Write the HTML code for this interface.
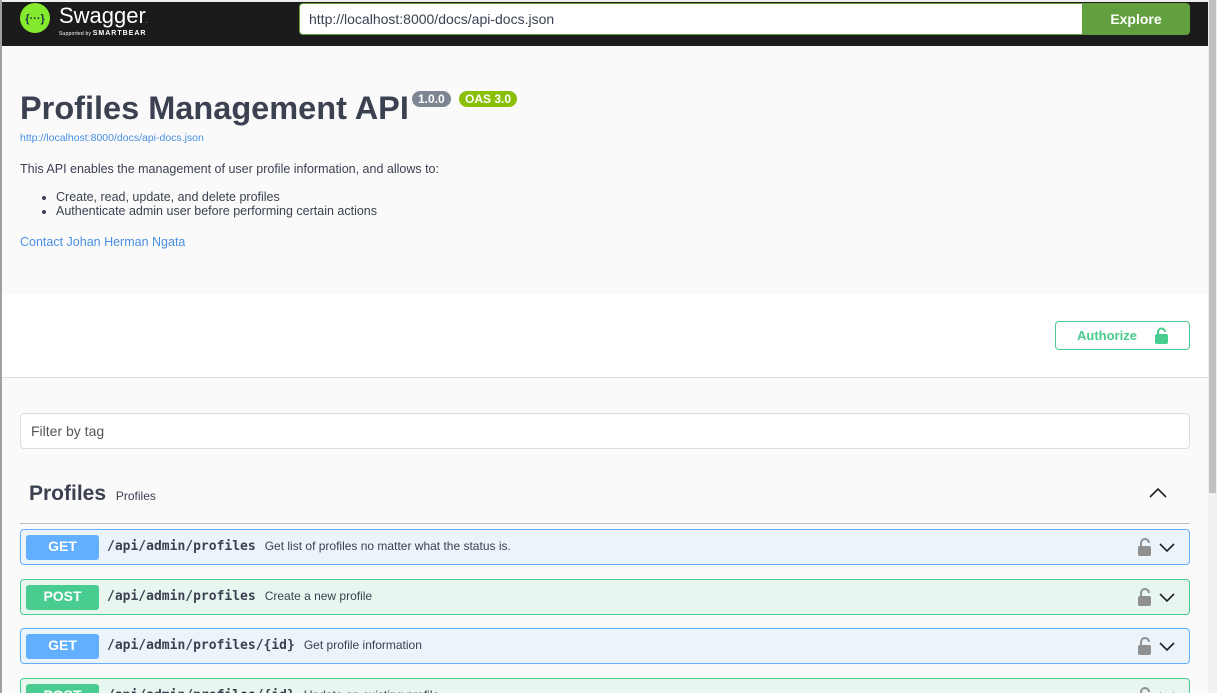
<!DOCTYPE html>
<html style="overflow:hidden;height:693px"><head><meta charset="utf-8"><style>
*{box-sizing:border-box;margin:0;padding:0}
body{width:1217px;height:693px;overflow:hidden;background:#fafafa;font-family:"Liberation Sans",sans-serif;color:#3b4151;position:relative}
.lb{position:absolute;left:0;top:0;width:2px;height:693px;background:#a0a0a0}
.top{position:absolute;left:2px;top:0;width:1206px;height:46px;background:#1b1b1b;border-top:2px solid #eee}
.sb{position:absolute;right:0;top:0;width:9px;height:693px;background:#f1f1f1}
.sbt{position:absolute;right:1px;top:0;width:7px;height:493px;background:#c1c1c1}
.url{position:absolute;left:299px;top:3px;width:784px;height:32px;border:1px solid #62a03f;border-right:none;background:#fff;border-radius:4px 0 0 4px;font-size:14px;padding:7px 9px;color:#3b4151}
.exp{position:absolute;left:1082px;top:3px;width:108px;height:32px;background:#62a03f;border-radius:0 4px 4px 0;color:#fff;font-weight:bold;font-size:14px;text-align:center;line-height:32px}
.white{position:absolute;left:2px;top:294px;width:1206px;height:84px;background:#fff;border-bottom:1px solid #ddd}
.auth{position:absolute;left:1055px;top:321px;width:135px;height:29px;border:1px solid #49cc90;border-radius:4px;color:#49cc90;font-weight:bold;font-size:13px;padding:6px 21px}
.filter{position:absolute;left:20px;top:413px;width:1170px;height:36px;border:1px solid #d8dde7;border-radius:4px;background:#fff;font-size:14px;color:#555;padding:9px 10px}
.op{position:absolute;left:20px;width:1170px;height:36px;border-radius:4px;border:1px solid}
.get{background:#ebf3fb;border-color:#61affe}
.post{background:#e8f6f0;border-color:#49cc90}
.m{position:absolute;left:5px;top:5px;width:73px;height:25px;border-radius:3px;color:#fff;font-weight:bold;font-size:14px;text-align:center;line-height:23px}
.get .m{background:#61affe}.post .m{background:#49cc90}
.p{position:absolute;left:86px;top:9px;font-family:"DejaVu Sans Mono",monospace;font-weight:bold;font-size:13px;color:#3b4151}
.d{font-family:"Liberation Sans",sans-serif;font-weight:normal;font-size:12px;margin-left:9px}
.ic{position:absolute;right:8px;top:8px}
</style></head><body>
<div class="top">
<svg style="position:absolute;left:18px;top:1px" width="30" height="30"><circle cx="15" cy="15" r="15" fill="#85ea2d"/><text x="15" y="19" font-size="11" font-weight="bold" text-anchor="middle" fill="#173647" font-family="Liberation Sans">{···}</text></svg>
<div style="position:absolute;left:57px;top:1px;color:#fff;font-size:22px">Swagger<span style="font-size:5px">.</span></div>
<div style="position:absolute;left:57px;top:28px;color:#fff;font-size:5px;letter-spacing:.2px">Supported by <b style="font-size:7px;letter-spacing:1px">SMARTBEAR</b></div>
</div>
<div class="url">http://localhost:8000/docs/api-docs.json</div>
<div class="exp">Explore</div>
<div class="lb"></div>
<div style="position:absolute;left:20px;top:90px;font-size:32.5px;font-weight:bold;color:#3b4151">Profiles Management API</div>
<div style="position:absolute;left:412px;top:91px;background:#7d8492;color:#fff;font-size:12px;font-weight:bold;border-radius:9px;padding:1px 6px">1.0.0</div>
<div style="position:absolute;left:459px;top:91px;background:#89bf04;color:#fff;font-size:12px;font-weight:bold;border-radius:9px;padding:1px 6px">OAS 3.0</div>
<div style="position:absolute;left:20px;top:132px;font-size:10.5px;color:#4990e2">http://localhost:8000/docs/api-docs.json</div>
<div style="position:absolute;left:20px;top:162px;font-size:12.5px">This API enables the management of user profile information, and allows to:</div>
<ul style="position:absolute;left:56px;top:190px;font-size:12.5px;line-height:14px">
<li>Create, read, update, and delete profiles</li><li>Authenticate admin user before performing certain actions</li></ul>
<div style="position:absolute;left:20px;top:235px;font-size:12.5px;color:#4990e2">Contact Johan Herman Ngata</div>
<div class="white"></div>
<div class="auth">Authorize <svg style="position:absolute;right:21px;top:5px" width="13" height="17"><path d="M3 8V5a3.5 3.5 0 0 1 7 0" stroke="#49cc90" stroke-width="2" fill="none"/><rect x="0" y="7" width="13" height="10" rx="2" fill="#49cc90"/></svg></div>
<div class="filter">Filter by tag</div>
<div style="position:absolute;left:29px;top:482px;font-size:21px;font-weight:bold">Profiles <span style="font-size:12px;font-weight:normal;margin-left:4px">Profiles</span></div>
<svg style="position:absolute;left:1149px;top:487px" width="18" height="12"><path d="M1 10L9 2L17 10" stroke="#222" stroke-width="1.6" fill="none"/></svg>
<div style="position:absolute;left:20px;top:523px;width:1170px;height:1px;background:#bbb"></div>
<div class="op get" style="top:529px"><div class="m">GET</div><div class="p">/api/admin/profiles<span class="d">Get list of profiles no matter what the status is.</span></div><svg class="ic" width="44" height="20"><path d="M4 8V5a4 4 0 0 1 8 0" stroke="#909090" stroke-width="2" fill="none"/><rect x="1" y="8" width="13" height="10" rx="2" fill="#909090"/><path d="M23 6l7 7l7-7" stroke="#222" stroke-width="1.6" fill="none"/></svg></div>
<div class="op post" style="top:579px"><div class="m">POST</div><div class="p">/api/admin/profiles<span class="d">Create a new profile</span></div><svg class="ic" width="44" height="20"><path d="M4 8V5a4 4 0 0 1 8 0" stroke="#909090" stroke-width="2" fill="none"/><rect x="1" y="8" width="13" height="10" rx="2" fill="#909090"/><path d="M23 6l7 7l7-7" stroke="#222" stroke-width="1.6" fill="none"/></svg></div>
<div class="op get" style="top:628px"><div class="m">GET</div><div class="p">/api/admin/profiles/{id}<span class="d">Get profile information</span></div><svg class="ic" width="44" height="20"><path d="M4 8V5a4 4 0 0 1 8 0" stroke="#909090" stroke-width="2" fill="none"/><rect x="1" y="8" width="13" height="10" rx="2" fill="#909090"/><path d="M23 6l7 7l7-7" stroke="#222" stroke-width="1.6" fill="none"/></svg></div>
<div class="op post" style="top:678px"><div class="m">POST</div><div class="p">/api/admin/profiles/{id}<span class="d">Update an existing profile</span></div><svg class="ic" width="44" height="20"><path d="M4 8V5a4 4 0 0 1 8 0" stroke="#909090" stroke-width="2" fill="none"/><rect x="1" y="8" width="13" height="10" rx="2" fill="#909090"/><path d="M23 6l7 7l7-7" stroke="#222" stroke-width="1.6" fill="none"/></svg></div>
<div class="sb"><div class="sbt"></div></div>
</body></html>
